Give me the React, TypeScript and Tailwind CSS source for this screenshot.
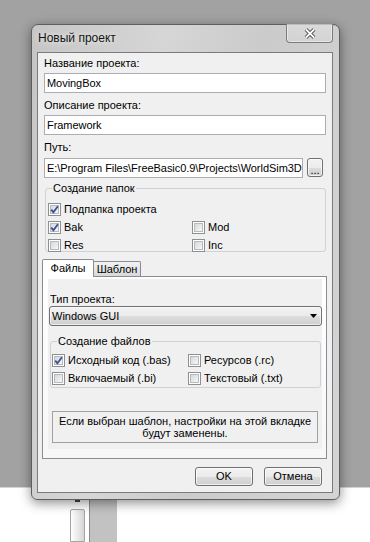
import React from "react";

// Win7 style checkbox
const Check = ({ checked }: { checked?: boolean }) => (
  <span className="relative flex h-[13px] w-[13px] shrink-0 border border-[#8e8f8f] bg-white p-px">
    <span className="h-full w-full border border-[#b7b9bc] bg-gradient-to-br from-[#d6d8db] to-[#f7f7f7]" />
    {checked && (
      <svg className="absolute left-0 top-0" width="11" height="11" viewBox="0 0 11 11">
        <path d="M2.2 5.6 L4.4 8.2 L8.9 2.2" fill="none" stroke="#3b5497" strokeWidth="1.9" />
      </svg>
    )}
  </span>
);

const CheckRow = ({ label, checked }: { label: string; checked?: boolean }) => (
  <label className="flex h-[18px] items-center gap-[3px]">
    <Check checked={checked} />
    <span>{label}</span>
  </label>
);

const Field = ({ value, w }: { value: string; w: string }) => (
  <div
    className={`flex h-[20px] ${w} items-center overflow-hidden whitespace-nowrap border border-[#abadb3] bg-white pl-[2px] tracking-[-0.05px]`}
  >
    {value}
  </div>
);

const Button = ({ label, className = "" }: { label: string; className?: string }) => (
  <button
    className={`rounded-[3px] border border-[#707070] bg-[linear-gradient(#f2f2f2,#ebebeb_50%,#dddddd_51%,#cfcfcf)] text-[11px] leading-none shadow-[inset_0_0_0_1px_rgba(255,255,255,0.7)] ${className}`}
  >
    {label}
  </button>
);

export default function App() {
  return (
    <div className="relative flex h-[542px] w-[370px] flex-col overflow-hidden bg-white font-['Liberation_Sans',Arial,sans-serif] text-[11px] leading-[13px] text-black">
      {/* desktop behind the dialog */}
      <div className="h-[487px] shrink-0 bg-[#a2a2a2]" />
      <div className="h-px shrink-0 bg-[#d4d4d4]" />
      <div className="flex flex-1 pl-[70px]">
        <div className="flex w-[15px] flex-col">
          <div className="ml-[5px] mt-[12px] h-[2px] w-[5px] bg-[#444]" />
          <div className="mt-[7px] flex-1 rounded-t-[2px] border border-[#a4a4a4] bg-gradient-to-r from-white to-[#d6d6d6]" />
        </div>
        <div className="ml-[4px] mt-[12px] w-[28px] border-l border-[#8c8c8c] bg-[#c2c2c2]" />
      </div>

      {/* dialog window */}
      <div className="absolute left-[31px] top-[24px] flex h-[476px] w-[309px] flex-col rounded-t-[7px] rounded-b-[6px] border border-[#5e5e5e] bg-[linear-gradient(100deg,#c6c6c6,#d6d6d6_35%,#cbcbcb_60%,#d4d4d4)] pl-[5px] shadow-[0_3px_12px_rgba(0,0,0,0.45)]">
        <div className="h-[27px] pl-px pt-[6px] text-[12px] leading-[14px] text-[#151515] [text-shadow:0_0_6px_rgba(255,255,255,0.9)]">
          Новый проект
        </div>
        <div className="absolute -top-px right-[6px] flex h-[19px] w-[47px] items-center justify-center rounded-b-[4px] border border-t-0 border-[#7c7c7c] bg-[linear-gradient(rgba(255,255,255,0.25),rgba(255,255,255,0.1))] shadow-[inset_0_0_0_1px_rgba(255,255,255,0.45)]">
          <svg width="12" height="11" viewBox="0 0 12 11">
            <path d="M2 1.5 L10 9.5 M10 1.5 L2 9.5" stroke="#3a3a3a" strokeWidth="3.6" />
            <path d="M2 1.5 L10 9.5 M10 1.5 L2 9.5" stroke="#ffffff" strokeWidth="1.8" />
          </svg>
        </div>

        {/* client area */}
        <div className="flex h-[441px] w-[296px] flex-col border border-[#7b7b7b] bg-[#f0f0f0] pl-[6px]">
          <div className="mt-[4px]">Название проекта:</div>
          <div className="mt-[3px] flex">
            <Field value="MovingBox" w="w-[282px]" />
          </div>
          <div className="mt-[6px]">Описание проекта:</div>
          <div className="mt-[3px] flex">
            <Field value="Framework" w="w-[282px]" />
          </div>
          <div className="mt-[6px]">Путь:</div>
          <div className="mt-[4px] flex items-start gap-[4px]">
            <Field value="E:\Program Files\FreeBasic0.9\Projects\WorldSim3D" w="w-[259px]" />
            <Button label="..." className="h-[19px] w-[16px] pt-[5px]" />
          </div>

          <fieldset className="ml-px mt-[4px] h-[70px] w-[281px] rounded-[3px] border border-[#cfd2d5]">
            <legend className="ml-[6px] px-px leading-[13px]">Создание папок</legend>
            <div className="mt-[5px] grid grid-cols-[144px_1fr] pl-[2px]">
              <div className="col-span-2">
                <CheckRow label="Подпапка проекта" checked />
              </div>
              <CheckRow label="Bak" checked />
              <CheckRow label="Mod" />
              <CheckRow label="Res" />
              <CheckRow label="Inc" />
            </div>
          </fieldset>

          {/* tabs */}
          <div className="-ml-[2px] mt-[7px] flex h-[17px] items-end">
            <div className="relative z-10 -mb-px flex h-[18px] w-[52px] items-center justify-center rounded-t-[2px] border border-b-0 border-[#898c95] bg-white">
              Файлы
            </div>
            <div className="flex h-[15px] w-[47px] items-center justify-center rounded-tr-[2px] border border-b-0 border-l-0 border-[#898c95] bg-gradient-to-b from-[#f3f3f3] to-[#d8d8d8]">
              Шаблон
            </div>
          </div>
          <div className="-ml-[2px] h-[183px] w-[285px] border border-[#898c95] bg-gradient-to-b from-white to-[#f7f7f7]">
            <div className="ml-[5px] mt-[2px] flex h-[170px] w-[274px] flex-col bg-[#f0f0f0]">
              <div className="mt-[14px] pl-[2px]">Тип проекта:</div>
              <div className="ml-px flex h-[20px] w-[273px] items-center justify-between rounded-[3px] border border-[#707070] bg-[linear-gradient(#f2f2f2,#ebebeb_50%,#dddddd_51%,#cfcfcf)] pl-[2px] pr-[4px] shadow-[inset_0_0_0_1px_rgba(255,255,255,0.6)]">
                <span>Windows GUI</span>
                <svg width="7" height="4" viewBox="0 0 7 4">
                  <path d="M0 0 H7 L3.5 4 Z" fill="#000" />
                </svg>
              </div>

              <fieldset className="ml-[2px] mt-[9px] h-[53px] w-[271px] rounded-[3px] border border-[#cfd2d5]">
                <legend className="ml-[6px] px-px leading-[13px]">Создание файлов</legend>
                <div className="mt-[3px] grid grid-cols-[136px_1fr] pl-px">
                  <CheckRow label="Исходный код (.bas)" checked />
                  <CheckRow label="Ресурсов (.rc)" />
                  <CheckRow label="Включаемый (.bi)" />
                  <CheckRow label="Текстовый (.txt)" />
                </div>
              </fieldset>

              <div className="ml-[4px] mt-[23px] h-[32px] w-[266px] border border-[#a0a0a0] pt-[3px] text-center leading-[12px]">
                Если выбран шаблон, настройки на этой вкладке
                <br />
                будут заменены.
              </div>
            </div>
          </div>

          <div className="mt-[8px] flex w-[282px] justify-end gap-[11px] pr-[4px]">
            <Button label="OK" className="h-[19px] w-[58px]" />
            <Button label="Отмена" className="h-[19px] w-[58px]" />
          </div>
        </div>
      </div>
    </div>
  );
}
